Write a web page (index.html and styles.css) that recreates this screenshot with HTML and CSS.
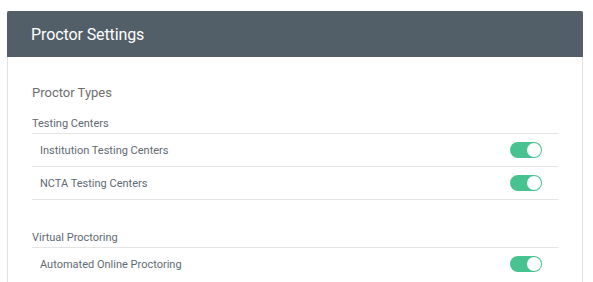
FILE: index.html
```html
<!DOCTYPE html>
<html lang="en">
<head>
    <meta charset="UTF-8">
    <meta name="viewport" content="width=device-width, initial-scale=1.0">
    <title>Proctor Settings</title>
    <link rel="stylesheet" href="styles.css">
</head>
<body>
    <div class="panel">
        <div class="panel-header">
            <h1>Proctor Settings</h1>
        </div>

        <div class="panel-body">
            <h2 class="section-title">Proctor Types</h2>

            <!-- Testing Centers -->
            <div class="group">
                <h3 class="group-title">Testing Centers</h3>
                <div class="setting-row">
                    <span>Institution Testing Centers</span>
                    <label class="toggle"><input type="checkbox" checked><span class="slider"></span></label>
                </div>
                <div class="setting-row">
                    <span>NCTA Testing Centers</span>
                    <label class="toggle"><input type="checkbox" checked><span class="slider"></span></label>
                </div>
            </div>

            <!-- Virtual Proctoring -->
            <div class="group">
                <h3 class="group-title">Virtual Proctoring</h3>
                <div class="setting-row">
                    <span>Automated Online Proctoring</span>
                    <label class="toggle"><input type="checkbox" checked><span class="slider"></span></label>
                </div>
            </div>
        </div>
    </div>
</body>
</html>
```

FILE: styles.css
```css
body {
    font-family: 'Roboto', 'Liberation Sans', sans-serif;
    background-color: #fff;
    color: #666;
    margin: 0;
}

.panel {
    width: 574px;
    margin: 11px 0 0 7px;
    border-left: 1px solid #e2e2e2;
    border-right: 1px solid #e2e2e2;
    height: 280px;
}

.panel-header {
    background-color: #525f69;
    height: 46px;
    margin: 0 -1px;
    padding: 0 24px;
    display: flex;
    align-items: center;
    border-radius: 2px 2px 0 0;
}

.panel-header h1 {
    margin: 0;
    font-size: 16px;
    font-weight: 400;
    color: #fff;
    letter-spacing: -0.1px;
}

.panel-body {
    padding: 28px 24px 0 24px;
}

.section-title {
    margin: 0 0 17px;
    font-size: 13px;
    font-weight: 400;
    color: #6e6e6e;
}

.group {
    margin-bottom: 31px;
}

.group-title {
    margin: 0;
    padding-bottom: 3px;
    font-size: 11px;
    font-weight: 400;
    color: #5f6a73;
    border-bottom: 1px solid #e4e4e4;
}

.setting-row {
    display: flex;
    justify-content: space-between;
    align-items: center;
    height: 32px;
    padding: 0 16px 0 8px;
    font-size: 11px;
    color: #5f6a73;
    border-bottom: 1px solid #e4e4e4;
}

.group:last-child .setting-row:last-child {
    border-bottom: none;
}

/* Toggle */
.toggle {
    position: relative;
    display: inline-block;
    width: 32px;
    height: 16px;
}

.toggle input {
    display: none;
}

.slider {
    position: absolute;
    inset: 0;
    background-color: #48c28f;
    border-radius: 8px;
}

.slider::after {
    content: '';
    position: absolute;
    top: 1px;
    right: 1px;
    width: 14px;
    height: 14px;
    border-radius: 50%;
    background-color: #fff;
}
```
